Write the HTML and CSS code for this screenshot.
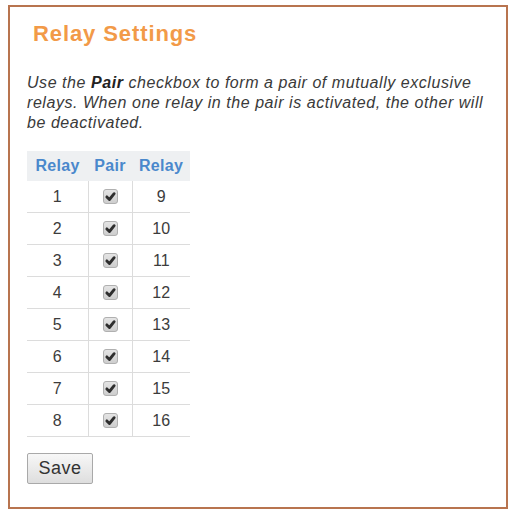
FILE: index.html
```html
<!DOCTYPE html>
<html>
<head>
<meta charset="utf-8">
<link rel="stylesheet" href="styles.css">
</head>
<body>
<div class="panel">
  <h2 class="title">Relay Settings</h2>
  <p class="intro">Use the <b>Pair</b> checkbox to form a pair of mutually exclusive relays. When one relay in the pair is activated, the other will be deactivated.</p>
  <table class="relays">
    <thead>
      <tr><th class="c1">Relay</th><th class="c2">Pair</th><th class="c3">Relay</th></tr>
    </thead>
    <tbody>
      <tr><td>1</td><td class="pair"><span class="cb"><svg viewBox="0 0 10 10"><path d="M2.2 5.3 L4.2 7.3 L7.8 2.8" /></svg></span></td><td>9</td></tr>
      <tr><td>2</td><td class="pair"><span class="cb"><svg viewBox="0 0 10 10"><path d="M2.2 5.3 L4.2 7.3 L7.8 2.8" /></svg></span></td><td>10</td></tr>
      <tr><td>3</td><td class="pair"><span class="cb"><svg viewBox="0 0 10 10"><path d="M2.2 5.3 L4.2 7.3 L7.8 2.8" /></svg></span></td><td>11</td></tr>
      <tr><td>4</td><td class="pair"><span class="cb"><svg viewBox="0 0 10 10"><path d="M2.2 5.3 L4.2 7.3 L7.8 2.8" /></svg></span></td><td>12</td></tr>
      <tr><td>5</td><td class="pair"><span class="cb"><svg viewBox="0 0 10 10"><path d="M2.2 5.3 L4.2 7.3 L7.8 2.8" /></svg></span></td><td>13</td></tr>
      <tr><td>6</td><td class="pair"><span class="cb"><svg viewBox="0 0 10 10"><path d="M2.2 5.3 L4.2 7.3 L7.8 2.8" /></svg></span></td><td>14</td></tr>
      <tr><td>7</td><td class="pair"><span class="cb"><svg viewBox="0 0 10 10"><path d="M2.2 5.3 L4.2 7.3 L7.8 2.8" /></svg></span></td><td>15</td></tr>
      <tr><td>8</td><td class="pair"><span class="cb"><svg viewBox="0 0 10 10"><path d="M2.2 5.3 L4.2 7.3 L7.8 2.8" /></svg></span></td><td>16</td></tr>
    </tbody>
  </table>
  <button class="save">Save</button>
</div>
</body>
</html>
```
FILE: styles.css
```css
html, body {
  margin: 0;
  padding: 0;
  background: #ffffff;
}
body {
  font-family: "Liberation Sans", Arial, sans-serif;
  color: #333;
}
.panel {
  box-sizing: border-box;
  margin: 5px 0 0 8px;
  width: 500px;
  height: 504px;
  border: 2px solid #b8744f;
  padding: 14px 17px 0 17px;
}
.title {
  margin: 0 0 0 6px;
  font-size: 22px;
  line-height: 26px;
  font-weight: bold;
  color: #f29a48;
  letter-spacing: 0.9px;
}
.intro {
  margin: 26px 0 0 0;
  width: 462px;
  font-size: 16px;
  line-height: 20px;
  font-style: italic;
  letter-spacing: 0.55px;
  color: #3a3a3a;
}
.intro b {
  color: #222;
}
.relays {
  margin-top: 18px;
  border-collapse: collapse;
  font-size: 16px;
}
.relays th {
  background: #eef0f2;
  color: #4a88cc;
  font-weight: bold;
  height: 30px;
  padding: 0;
  text-align: center;
  letter-spacing: 0.3px;
}
.relays .c1 { width: 61px; }
.relays .c2 { width: 44px; }
.relays .c3 { width: 58px; }
.relays td {
  height: 31px;
  padding: 0;
  text-align: center;
  color: #3c3c3c;
  border-bottom: 1px solid #dcdcdc;
}
.relays td.pair {
  border-left: 1px solid #dcdcdc;
  border-right: 1px solid #dcdcdc;
}
.cb {
  display: inline-block;
  box-sizing: border-box;
  width: 15px;
  height: 15px;
  border: 1px solid #b0b0b0;
  border-radius: 3px;
  background: linear-gradient(#e4e4e4, #cecece);
  vertical-align: middle;
  position: relative;
  top: -1px;
}
.cb svg {
  display: block;
  width: 13px;
  height: 13px;
}
.cb path {
  fill: none;
  stroke: #2e2e2e;
  stroke-width: 2.2;
  stroke-linecap: round;
  stroke-linejoin: round;
}
.save {
  display: block;
  margin-top: 16px;
  width: 66px;
  height: 31px;
  padding: 0;
  font-family: "Liberation Sans", Arial, sans-serif;
  font-size: 18px;
  letter-spacing: 0.5px;
  color: #333;
  background: linear-gradient(#f7f7f7, #dedede);
  border: 1px solid #a9a9a9;
  border-radius: 2px;
}
```
